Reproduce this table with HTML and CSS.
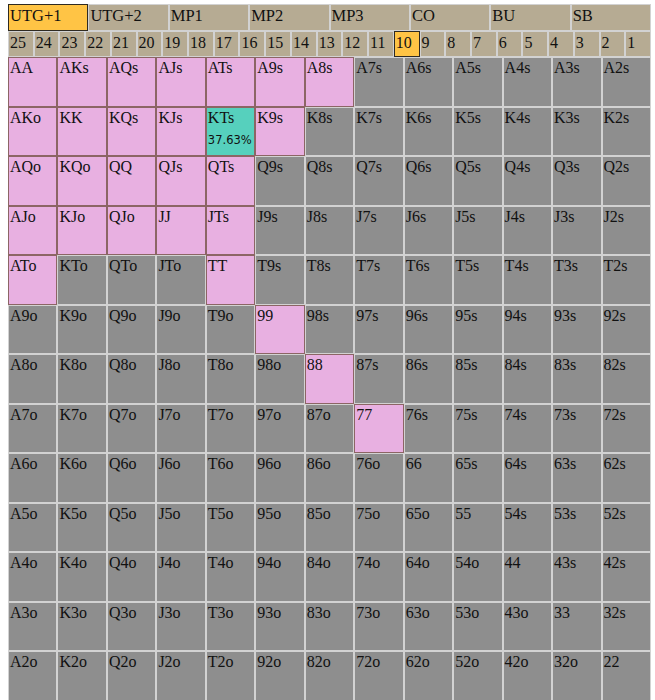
FILE: index.html
```html
<!DOCTYPE html>
<html>
<head>
<meta charset="utf-8">
<link rel="stylesheet" href="styles.css">
</head>
<body>
<div class="wrap">
  <div class="positions">
    <div class="pos sel">UTG+1</div>
    <div class="pos">UTG+2</div>
    <div class="pos">MP1</div>
    <div class="pos">MP2</div>
    <div class="pos">MP3</div>
    <div class="pos">CO</div>
    <div class="pos">BU</div>
    <div class="pos">SB</div>
  </div>
  <div class="stacks">
    <div class="num">25</div><div class="num">24</div><div class="num">23</div><div class="num">22</div><div class="num">21</div><div class="num">20</div><div class="num">19</div><div class="num">18</div><div class="num">17</div><div class="num">16</div><div class="num">15</div><div class="num">14</div><div class="num">13</div><div class="num">12</div><div class="num">11</div><div class="num sel">10</div><div class="num">9</div><div class="num">8</div><div class="num">7</div><div class="num">6</div><div class="num">5</div><div class="num">4</div><div class="num">3</div><div class="num">2</div><div class="num">1</div>
  </div>
  <div class="grid">
    <div class="c p">AA</div><div class="c p">AKs</div><div class="c p">AQs</div><div class="c p">AJs</div><div class="c p">ATs</div><div class="c p">A9s</div><div class="c p">A8s</div><div class="c">A7s</div><div class="c">A6s</div><div class="c">A5s</div><div class="c">A4s</div><div class="c">A3s</div><div class="c">A2s</div>
    <div class="c p">AKo</div><div class="c p">KK</div><div class="c p">KQs</div><div class="c p">KJs</div><div class="c t">KTs<div class="pct">37.63%</div></div><div class="c p">K9s</div><div class="c">K8s</div><div class="c">K7s</div><div class="c">K6s</div><div class="c">K5s</div><div class="c">K4s</div><div class="c">K3s</div><div class="c">K2s</div>
    <div class="c p">AQo</div><div class="c p">KQo</div><div class="c p">QQ</div><div class="c p">QJs</div><div class="c p">QTs</div><div class="c">Q9s</div><div class="c">Q8s</div><div class="c">Q7s</div><div class="c">Q6s</div><div class="c">Q5s</div><div class="c">Q4s</div><div class="c">Q3s</div><div class="c">Q2s</div>
    <div class="c p">AJo</div><div class="c p">KJo</div><div class="c p">QJo</div><div class="c p">JJ</div><div class="c p">JTs</div><div class="c">J9s</div><div class="c">J8s</div><div class="c">J7s</div><div class="c">J6s</div><div class="c">J5s</div><div class="c">J4s</div><div class="c">J3s</div><div class="c">J2s</div>
    <div class="c p">ATo</div><div class="c">KTo</div><div class="c">QTo</div><div class="c">JTo</div><div class="c p">TT</div><div class="c">T9s</div><div class="c">T8s</div><div class="c">T7s</div><div class="c">T6s</div><div class="c">T5s</div><div class="c">T4s</div><div class="c">T3s</div><div class="c">T2s</div>
    <div class="c">A9o</div><div class="c">K9o</div><div class="c">Q9o</div><div class="c">J9o</div><div class="c">T9o</div><div class="c p">99</div><div class="c">98s</div><div class="c">97s</div><div class="c">96s</div><div class="c">95s</div><div class="c">94s</div><div class="c">93s</div><div class="c">92s</div>
    <div class="c">A8o</div><div class="c">K8o</div><div class="c">Q8o</div><div class="c">J8o</div><div class="c">T8o</div><div class="c">98o</div><div class="c p">88</div><div class="c">87s</div><div class="c">86s</div><div class="c">85s</div><div class="c">84s</div><div class="c">83s</div><div class="c">82s</div>
    <div class="c">A7o</div><div class="c">K7o</div><div class="c">Q7o</div><div class="c">J7o</div><div class="c">T7o</div><div class="c">97o</div><div class="c">87o</div><div class="c p">77</div><div class="c">76s</div><div class="c">75s</div><div class="c">74s</div><div class="c">73s</div><div class="c">72s</div>
    <div class="c">A6o</div><div class="c">K6o</div><div class="c">Q6o</div><div class="c">J6o</div><div class="c">T6o</div><div class="c">96o</div><div class="c">86o</div><div class="c">76o</div><div class="c">66</div><div class="c">65s</div><div class="c">64s</div><div class="c">63s</div><div class="c">62s</div>
    <div class="c">A5o</div><div class="c">K5o</div><div class="c">Q5o</div><div class="c">J5o</div><div class="c">T5o</div><div class="c">95o</div><div class="c">85o</div><div class="c">75o</div><div class="c">65o</div><div class="c">55</div><div class="c">54s</div><div class="c">53s</div><div class="c">52s</div>
    <div class="c">A4o</div><div class="c">K4o</div><div class="c">Q4o</div><div class="c">J4o</div><div class="c">T4o</div><div class="c">94o</div><div class="c">84o</div><div class="c">74o</div><div class="c">64o</div><div class="c">54o</div><div class="c">44</div><div class="c">43s</div><div class="c">42s</div>
    <div class="c">A3o</div><div class="c">K3o</div><div class="c">Q3o</div><div class="c">J3o</div><div class="c">T3o</div><div class="c">93o</div><div class="c">83o</div><div class="c">73o</div><div class="c">63o</div><div class="c">53o</div><div class="c">43o</div><div class="c">33</div><div class="c">32s</div>
    <div class="c">A2o</div><div class="c">K2o</div><div class="c">Q2o</div><div class="c">J2o</div><div class="c">T2o</div><div class="c">92o</div><div class="c">82o</div><div class="c">72o</div><div class="c">62o</div><div class="c">52o</div><div class="c">42o</div><div class="c">32o</div><div class="c">22</div>
  </div>
</div>
</body>
</html>
```

FILE: styles.css
```css
html, body {
  background: #ffffff;
}
body {
  margin: 4px 0 0 8px;
  font-family: "Liberation Serif", "Times New Roman", serif;
  color: #111111;
}
.wrap {
  width: 643px;
}
.positions {
  display: flex;
  height: 27px;
}
.pos {
  flex: 1;
  box-sizing: border-box;
  background: #b6ab93;
  border: 1px solid #d2d2d2;
  font-size: 16.5px;
  line-height: 22px;
  padding-left: 1px;
}
.stacks {
  display: flex;
  height: 26px;
}
.num {
  flex: 1;
  box-sizing: border-box;
  background: #b6ab93;
  border: 1px solid #d2d2d2;
  font-size: 16px;
  line-height: 21px;
  padding-left: 1px;
}
.sel {
  background: #ffc445;
  border-color: #2e2a22;
}
.grid {
  display: grid;
  grid-template-columns: repeat(13, 1fr);
  grid-auto-rows: 49.5px;
}
.c {
  box-sizing: border-box;
  background: #8e8e8e;
  border: 1px solid #d2d2d2;
  font-size: 16px;
  line-height: 20px;
  padding-left: 1px;
  color: #111111;
}
.c.p {
  background: #e8b0e1;
  border-color: #8c6565;
}
.c.t {
  background: #56d0bd;
  border-color: #8c6565;
}
.pct {
  font-family: "DejaVu Sans", Verdana, sans-serif;
  font-size: 11.5px;
  line-height: 18px;
  margin-top: 3px;
  color: #111111;
}
```
